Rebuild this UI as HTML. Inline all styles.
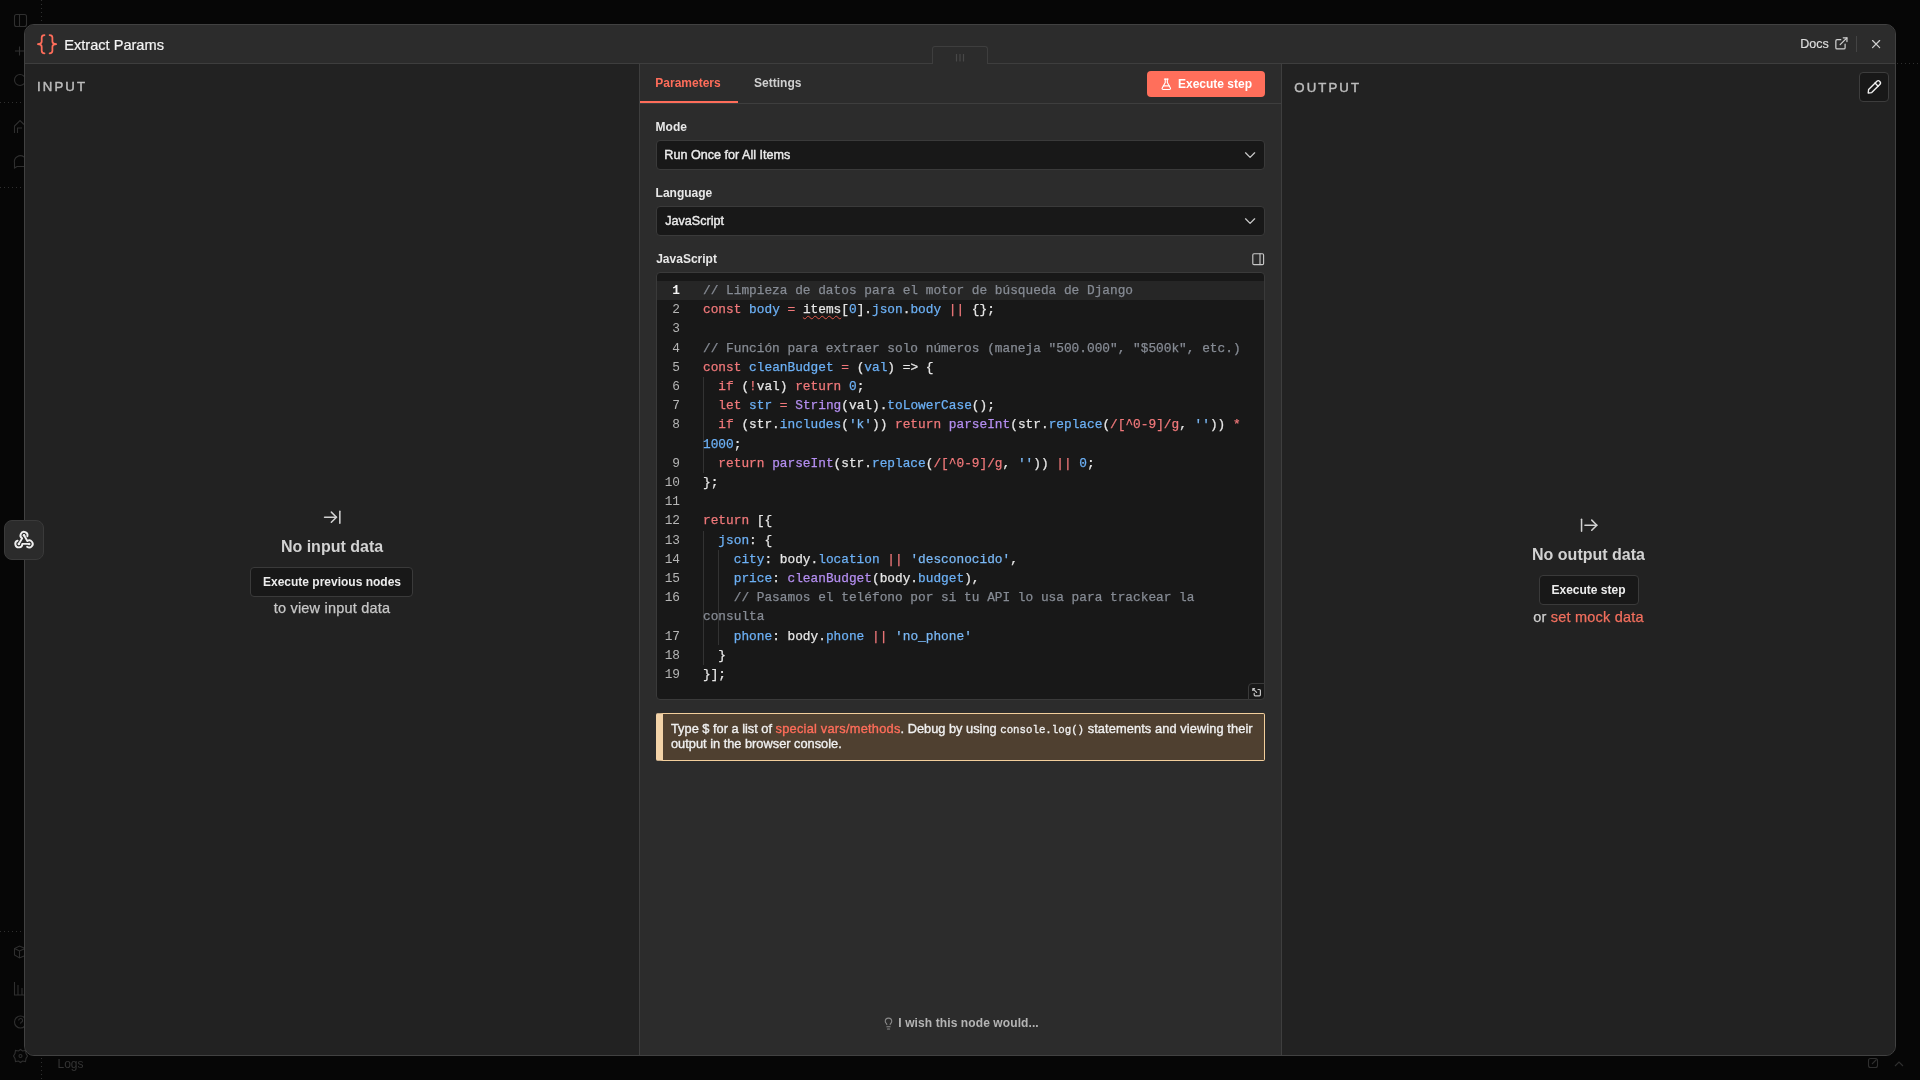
<!DOCTYPE html>
<html><head><meta charset="utf-8">
<style>
*{box-sizing:border-box;margin:0;padding:0}
html,body{width:1920px;height:1080px;overflow:hidden;background:#060606;font-family:"Liberation Sans",sans-serif;color:#e0e0e0}
.a{position:absolute}
.tx{position:absolute;white-space:pre;line-height:1}
.b{font-weight:bold}
svg{position:absolute;overflow:visible}
#modal{position:absolute;left:24px;top:24px;width:1872px;height:1032px;border:1px solid #414141;border-radius:10px;overflow:hidden;background:#222}
#hdr{position:absolute;left:0;top:0;width:1870px;height:39px;background:#2c2c2c;border-bottom:1px solid #3e3e3e}
#inp{position:absolute;left:0;top:39px;width:614px;height:991px;background:#222}
#mid{position:absolute;left:614px;top:39px;width:643px;height:991px;background:#2c2c2c;border-left:1px solid #3e3e3e;border-right:1px solid #3e3e3e}
#out{position:absolute;left:1257px;top:39px;width:613px;height:991px;background:#222}
.sel{position:absolute;left:656px;width:609px;height:30px;background:#181818;border:1px solid #3a3a3a;border-radius:4px}
.btn{position:absolute;background:#181818;border:1px solid #3a3a3a;border-radius:4px}
.cl{position:absolute;left:703px;height:19.2px;font:12.8px/19.2px "Liberation Mono",monospace;white-space:pre;-webkit-text-stroke:0.25px currentColor}
.cl span{-webkit-text-stroke:0.25px currentColor}
.gn{position:absolute;left:657px;width:23px;text-align:right;height:19.2px;font:12.8px/19.2px "Liberation Mono",monospace;color:#b5b5b5}
.gn.act{color:#f5f5f5;font-weight:bold}
.tu{text-decoration:underline wavy #e0584a;text-decoration-thickness:1px;text-underline-offset:2px}
.tc{color:#868b94}
.tk{color:#f0787a}
.tv{color:#6cb0f5}
.tw{color:#e6e6e6}
.tf{color:#b48ef0}
.ts{color:#7ab8f5}
.tn{color:#6cb0f5}
.tr{color:#f0787a}
.tu{color:#e6e6e6}
</style></head><body style="will-change:transform">
<!-- background canvas (faint) -->
<svg class="bgi" style="left:0;top:0" width="1920" height="1080" viewBox="0 0 1920 1080" fill="none" stroke="#2f2f2f" stroke-width="1.1">
  <line x1="41.5" y1="0" x2="41.5" y2="24" stroke-dasharray="1 3"/>
  <rect x="14.5" y="14.5" width="12" height="12" rx="2"/>
  <line x1="19.5" y1="14.5" x2="19.5" y2="26.5"/>
  <line x1="15" y1="51" x2="24" y2="51"/><line x1="19.5" y1="46.5" x2="19.5" y2="55.5"/>
  <circle cx="20" cy="80" r="5.5"/>
  <line x1="0" y1="102.5" x2="24" y2="102.5" stroke-dasharray="1 3"/>
  <path d="M14.5 133 V126 L20 120.5 L24 124.5 M17.5 133 V128 H22"/>
  <path d="M24 157 A6 6 0 0 0 14.5 163 L14.5 168 L17 166.5 H24"/>
  <line x1="0" y1="187.5" x2="24" y2="187.5" stroke-dasharray="1 3"/>
  <line x1="0" y1="931.5" x2="24" y2="931.5" stroke-dasharray="1 3"/>
  <path d="M24 948 L19.5 946 L14.5 948.5 V955 L19.5 958 L24 956 M14.5 948.5 L19.5 951 L24 949 M19.5 951 V958"/>
  <path d="M14.5 982 V995 H24 M18 985 V995 M22 988 V995"/>
  <circle cx="20.5" cy="1022" r="6"/><path d="M18.6 1020.4 A2 2 0 1 1 21 1022.4 L20.5 1023.6 M20.5 1025.4 V1025.6"/>
  <circle cx="20.5" cy="1056" r="1.5"/>
  <path d="M20.5 1049.5 L22.5 1051 L25.5 1050.5 L26 1053.5 L27.5 1056 L26 1058.5 L25.5 1061.5 L22.5 1061 L20.5 1062.5 L18.5 1061 L15.5 1061.5 L15 1058.5 L13.5 1056 L15 1053.5 L15.5 1050.5 L18.5 1051 Z"/>
  <line x1="41.5" y1="1058" x2="41.5" y2="1080" stroke-dasharray="1 3"/>
  <line x1="1897" y1="63.5" x2="1920" y2="63.5" stroke-dasharray="1 3"/>
  <rect x="1868.5" y="1058.5" width="9" height="9" rx="2"/>
  <path d="M1872 1064 L1876.5 1059.5"/>
  <path d="M1895 1066 L1899 1062 L1903 1066"/>
</svg>
<div class="tx" style="left:57.5px;top:1057.6px;font-size:12px;color:#343434">Logs</div>

<div id="modal">
  <div id="hdr"></div>
  <div id="inp"></div>
  <div id="mid"></div>
  <div id="out"></div>
</div>

<!-- drag handle -->
<div class="a" style="left:932px;top:46px;width:56px;height:18px;background:#2c2c2c;border:1px solid #3e3e3e;border-bottom:none;border-radius:3px 3px 0 0"></div>
<svg style="left:955px;top:54px" width="10" height="8" viewBox="0 0 10 8" stroke="#484848" stroke-width="1.2">
  <line x1="1.5" y1="0" x2="1.5" y2="7.5"/><line x1="5" y1="0" x2="5" y2="7.5"/><line x1="8.5" y1="0" x2="8.5" y2="7.5"/>
</svg>

<!-- header -->
<svg style="left:30px;top:30px" width="30" height="30" viewBox="0 0 30 30" fill="none" stroke="#ff6d5a" stroke-width="1.75" stroke-linecap="round" stroke-linejoin="round">
  <path d="M14.5 5 C12.8 5 11.7 5.7 11.7 7.6 V11.6 C11.7 13.2 10.9 14 7.9 14.2 C10.9 14.4 11.7 15.2 11.7 16.8 V20.8 C11.7 22.7 12.8 23.3 14.5 23.3"/><path d="M19.6 5 C21.3 5 22.4 5.7 22.4 7.6 V11.6 C22.4 13.2 23.2 14 26.2 14.2 C23.2 14.4 22.4 15.2 22.4 16.8 V20.8 C22.4 22.7 21.3 23.3 19.6 23.3"/>
</svg>
<div class="tx" style="left:64.2px;top:37.66px;font-size:14.6px;color:#f4f4f4;-webkit-text-stroke:0.2px #f4f4f4">Extract Params</div>

<div class="tx" style="left:1800.3px;top:38.3px;font-size:12.5px;color:#dcdcdc;-webkit-text-stroke:0.2px #dcdcdc">Docs</div>
<svg style="left:1833.75px;top:35.5px" width="14.8" height="14.8" viewBox="0 0 24 24" fill="none" stroke="#d0d0d0" stroke-width="2" stroke-linecap="round" stroke-linejoin="round">
  <path d="M15 3h6v6"/><path d="M10 14 21 3"/><path d="M18 13v6a2 2 0 0 1-2 2H5a2 2 0 0 1-2-2V8a2 2 0 0 1 2-2h6"/>
</svg>
<div class="a" style="left:1856px;top:36px;width:1px;height:16px;background:#444"></div>
<svg style="left:1868.9px;top:36.95px" width="14.2" height="14.2" viewBox="0 0 24 24" fill="none" stroke="#cfcfcf" stroke-width="2.1" stroke-linecap="round" stroke-linejoin="round">
  <path d="M18 6 6 18"/><path d="m6 6 12 12"/>
</svg>

<!-- INPUT panel -->
<div class="tx" style="left:37px;top:80px;font-size:13.2px;letter-spacing:2.1px;color:#bdbdbd;-webkit-text-stroke:0.45px #bdbdbd">INPUT</div>
<svg style="left:322.1px;top:506.8px" width="20.4" height="20.4" viewBox="0 0 24 24" fill="none" stroke="#d2d2d2" stroke-width="1.8" stroke-linecap="round" stroke-linejoin="round">
  <path d="M17 12H3"/><path d="m11 18 6-6-6-6"/><path d="M21 5v14"/>
</svg>
<div class="tx b" style="left:25px;width:614px;text-align:center;top:538.58px;font-size:16px;color:#d2d2d2">No input data</div>
<div class="btn" style="left:250px;top:567px;width:163px;height:30px"></div>
<div class="tx b" style="left:25px;width:614px;text-align:center;top:575.66px;font-size:12px;color:#ececec">Execute previous nodes</div>
<div class="tx" style="left:25px;width:614px;text-align:center;top:600.75px;font-size:14.5px;letter-spacing:0.2px;color:#c8c8c8;-webkit-text-stroke:0.25px #c8c8c8">to view input data</div>

<!-- webhook floating button -->
<div class="a" style="left:4px;top:520px;width:40px;height:40px;background:#2b2b2b;border:1px solid #3a3a3a;border-radius:8px"></div>
<svg style="left:10px;top:526px" width="28" height="28" viewBox="0 0 28 28" fill="none" stroke="#efefef" stroke-width="1.9" stroke-linecap="round" stroke-linejoin="round">
  <path d="M8.80 17.90 L12.18 12.34 A3.5 3.5 0 1 1 17.38 10.26"/><path d="M14.00 9.35 L17.38 14.91 A3.5 3.5 0 1 1 17.09 20.70"/><path d="M19.20 17.90 L12.30 17.90 A3.5 3.5 0 1 1 7.60 14.61"/>
  <g fill="#efefef" stroke="none"><circle cx="14.0" cy="9.35" r="1.25"/><circle cx="8.8" cy="17.9" r="1.25"/><circle cx="19.2" cy="17.9" r="1.25"/></g>
</svg>

<!-- MIDDLE panel -->
<div class="tx b" style="left:655.3px;top:76.96px;font-size:12px;color:#ff6d5a">Parameters</div>
<div class="tx b" style="left:754.1px;top:76.96px;font-size:12px;color:#d0d0d0">Settings</div>
<div class="a" style="left:640px;top:103px;width:641px;height:1px;background:#3e3e3e"></div>
<div class="a" style="left:640px;top:101px;width:98px;height:2px;background:#ff6d5a"></div>

<div class="a" style="left:1147px;top:71px;width:118px;height:26px;background:#ff6f5b;border-radius:4px"></div>
<svg style="left:1159.75px;top:77.65px" width="12.6" height="12.6" viewBox="0 0 24 24" fill="none" stroke="#fff" stroke-width="2.2" stroke-linecap="round" stroke-linejoin="round">
  <path d="M14 2v6a2 2 0 0 0 .245.96l5.51 10.08A2 2 0 0 1 18 22H6a2 2 0 0 1-1.755-2.96l5.51-10.08A2 2 0 0 0 10 8V2"/><path d="M6.453 15h11.094"/><path d="M8.5 2h7"/>
</svg>
<div class="tx b" style="left:1178px;top:77.86px;font-size:12px;color:#fff">Execute step</div>

<div class="tx b" style="left:655.6px;top:120.9px;font-size:12px;color:#e8e8e8">Mode</div>
<div class="sel" style="top:140px"></div>
<div class="tx" style="left:664.3px;top:148.6px;font-size:12.6px;color:#ececec;-webkit-text-stroke:0.4px #ececec">Run Once for All Items</div>
<svg style="left:1240.9px;top:145.9px" width="18.2" height="18.2" viewBox="0 0 24 24" fill="none" stroke="#c8c8c8" stroke-width="1.7" stroke-linecap="round" stroke-linejoin="round"><path d="m6 9 6 6 6-6"/></svg>

<div class="tx b" style="left:655.6px;top:187.2px;font-size:12px;color:#e8e8e8">Language</div>
<div class="sel" style="top:206px"></div>
<div class="tx" style="left:665.2px;top:214.8px;font-size:12.6px;color:#ececec;-webkit-text-stroke:0.4px #ececec">JavaScript</div>
<svg style="left:1240.9px;top:211.9px" width="18.2" height="18.2" viewBox="0 0 24 24" fill="none" stroke="#c8c8c8" stroke-width="1.7" stroke-linecap="round" stroke-linejoin="round"><path d="m6 9 6 6 6-6"/></svg>

<div class="tx b" style="left:656.2px;top:253px;font-size:12px;color:#e8e8e8">JavaScript</div>
<svg style="left:1250.8px;top:251.7px" width="14.4" height="14.4" viewBox="0 0 24 24" fill="none" stroke="#c8c8c8" stroke-width="1.9" stroke-linecap="round" stroke-linejoin="round">
  <rect width="18" height="18" x="3" y="3" rx="2"/><path d="M15 3v18"/>
</svg>

<!-- code editor -->
<div class="a" style="left:656px;top:272px;width:609px;height:428px;background:#181818;border:1px solid #3a3a3a;border-radius:4px"></div>
<div class="a" style="left:657px;top:281px;width:607px;height:19.2px;background:#262626"></div>
<!-- indent guides -->
<div class="a" style="left:703px;top:377px;width:1px;height:96px;background:#333"></div>
<div class="a" style="left:703px;top:531px;width:1px;height:134px;background:#333"></div>
<div class="a" style="left:718px;top:550px;width:1px;height:95px;background:#333"></div>
<div class="gn act" style="top:281.00px">1</div>
<div class="gn" style="top:300.20px">2</div>
<div class="gn" style="top:319.40px">3</div>
<div class="gn" style="top:338.60px">4</div>
<div class="gn" style="top:357.80px">5</div>
<div class="gn" style="top:377.00px">6</div>
<div class="gn" style="top:396.20px">7</div>
<div class="gn" style="top:415.40px">8</div>
<div class="gn" style="top:453.80px">9</div>
<div class="gn" style="top:473.00px">10</div>
<div class="gn" style="top:492.20px">11</div>
<div class="gn" style="top:511.40px">12</div>
<div class="gn" style="top:530.60px">13</div>
<div class="gn" style="top:549.80px">14</div>
<div class="gn" style="top:569.00px">15</div>
<div class="gn" style="top:588.20px">16</div>
<div class="gn" style="top:626.60px">17</div>
<div class="gn" style="top:645.80px">18</div>
<div class="gn" style="top:665.00px">19</div>
<div class="cl" style="top:281.00px"><span class="tc">// Limpieza de datos para el motor de búsqueda de Django</span></div>
<div class="cl" style="top:300.20px"><span class="tk">const</span><span class="tw"> </span><span class="tv">body</span><span class="tw"> </span><span class="tk">=</span><span class="tw"> </span><span class="tu">items</span><span class="tw">[</span><span class="tn">0</span><span class="tw">].</span><span class="tv">json</span><span class="tw">.</span><span class="tv">body</span><span class="tw"> </span><span class="tk">||</span><span class="tw"> {};</span></div>
<div class="cl" style="top:319.40px"></div>
<div class="cl" style="top:338.60px"><span class="tc">// Función para extraer solo números (maneja "500.000", "$500k", etc.)</span></div>
<div class="cl" style="top:357.80px"><span class="tk">const</span><span class="tw"> </span><span class="tv">cleanBudget</span><span class="tw"> </span><span class="tk">=</span><span class="tw"> (</span><span class="tv">val</span><span class="tw">) =&gt; {</span></div>
<div class="cl" style="top:377.00px"><span class="tw">  </span><span class="tk">if</span><span class="tw"> (</span><span class="tk">!</span><span class="tw">val) </span><span class="tk">return</span><span class="tw"> </span><span class="tn">0</span><span class="tw">;</span></div>
<div class="cl" style="top:396.20px"><span class="tw">  </span><span class="tk">let</span><span class="tw"> </span><span class="tv">str</span><span class="tw"> </span><span class="tk">=</span><span class="tw"> </span><span class="tf">String</span><span class="tw">(val).</span><span class="tv">toLowerCase</span><span class="tw">();</span></div>
<div class="cl" style="top:415.40px"><span class="tw">  </span><span class="tk">if</span><span class="tw"> (str.</span><span class="tv">includes</span><span class="tw">(</span><span class="ts">'k'</span><span class="tw">)) </span><span class="tk">return</span><span class="tw"> </span><span class="tf">parseInt</span><span class="tw">(str.</span><span class="tv">replace</span><span class="tw">(</span><span class="tr">/[^0-9]/g</span><span class="tw">, </span><span class="ts">''</span><span class="tw">))</span><span class="tw"> </span><span class="tk">*</span></div>
<div class="cl" style="top:434.60px"><span class="tn">1000</span><span class="tw">;</span></div>
<div class="cl" style="top:453.80px"><span class="tw">  </span><span class="tk">return</span><span class="tw"> </span><span class="tf">parseInt</span><span class="tw">(str.</span><span class="tv">replace</span><span class="tw">(</span><span class="tr">/[^0-9]/g</span><span class="tw">, </span><span class="ts">''</span><span class="tw">))</span><span class="tw"> </span><span class="tk">||</span><span class="tw"> </span><span class="tn">0</span><span class="tw">;</span></div>
<div class="cl" style="top:473.00px"><span class="tw">};</span></div>
<div class="cl" style="top:492.20px"></div>
<div class="cl" style="top:511.40px"><span class="tk">return</span><span class="tw"> [{</span></div>
<div class="cl" style="top:530.60px"><span class="tw">  </span><span class="tv">json</span><span class="tw">: {</span></div>
<div class="cl" style="top:549.80px"><span class="tw">    </span><span class="tv">city</span><span class="tw">: body.</span><span class="tv">location</span><span class="tw"> </span><span class="tk">||</span><span class="tw"> </span><span class="ts">'desconocido'</span><span class="tw">,</span></div>
<div class="cl" style="top:569.00px"><span class="tw">    </span><span class="tv">price</span><span class="tw">: </span><span class="tf">cleanBudget</span><span class="tw">(body.</span><span class="tv">budget</span><span class="tw">),</span></div>
<div class="cl" style="top:588.20px"><span class="tw">    </span><span class="tc">// Pasamos el teléfono por si tu API lo usa para trackear la</span></div>
<div class="cl" style="top:607.40px"><span class="tc">consulta</span></div>
<div class="cl" style="top:626.60px"><span class="tw">    </span><span class="tv">phone</span><span class="tw">: body.</span><span class="tv">phone</span><span class="tw"> </span><span class="tk">||</span><span class="tw"> </span><span class="ts">'no_phone'</span></div>
<div class="cl" style="top:645.80px"><span class="tw">  }</span></div>
<div class="cl" style="top:665.00px"><span class="tw">}];</span></div>
<div class="a" style="left:1248px;top:683px;width:17px;height:17px;background:#181818;border:1px solid #3a3a3a;border-radius:4px 0 4px 0"></div>
<svg style="left:1251px;top:687px" width="11" height="11" viewBox="0 0 11 11" fill="none" stroke="#c4c4c4" stroke-width="1.2" stroke-linecap="round" stroke-linejoin="round">
  <path d="M7 2.5 H8.4 C9 2.5 9.4 2.9 9.4 3.5 V7.8 C9.4 8.4 9 8.8 8.4 8.8 H4.2 C3.6 8.8 3.2 8.4 3.2 7.8 V6.4"/><path d="M1.8 1.6 L5.6 5.4 M1.8 1.6 V3.4 M1.8 1.6 H3.6"/>
</svg>

<!-- notice -->
<div class="a" style="left:656px;top:713px;width:609px;height:48px;background:#4f4030;border:1px solid #f3cf9c;border-left:7px solid #f3d3a8;border-radius:2px"></div>
<div class="tx" style="left:671px;top:723.3px;font-size:12.8px;color:#f0f0f0;-webkit-text-stroke:0.35px #f0f0f0">Type $ for a list of <span style="color:#ff6d5a;-webkit-text-stroke:0.35px #ff6d5a;letter-spacing:0.24px">special vars/methods</span>. Debug by using <span style="font:10.75px 'Liberation Mono',monospace;-webkit-text-stroke:0.3px #f0f0f0">console.log()</span><span style="letter-spacing:0.1px"> statements and viewing their</span></div>
<div class="tx" style="left:671px;top:738.2px;font-size:12.8px;color:#f0f0f0;-webkit-text-stroke:0.35px #f0f0f0">output in the browser console.</div>

<!-- wish -->
<svg style="left:882.35px;top:1016.55px" width="13" height="13" viewBox="0 0 24 24" fill="none" stroke="#8a8a8a" stroke-width="2" stroke-linecap="round" stroke-linejoin="round">
  <path d="M15 14c.2-1 .7-1.7 1.5-2.5 1-.9 1.5-2.2 1.5-3.5A6 6 0 0 0 6 8c0 1 .2 2.2 1.5 3.5.7.7 1.3 1.5 1.5 2.5"/><path d="M9 18h6"/><path d="M10 22h4"/>
</svg>
<div class="tx b" style="left:898.3px;top:1016.66px;font-size:12px;letter-spacing:0.1px;color:#b4b4b4">I wish this node would...</div>

<!-- OUTPUT panel -->
<div class="tx" style="left:1294.3px;top:81.2px;font-size:13.2px;letter-spacing:2.1px;color:#bdbdbd;-webkit-text-stroke:0.45px #bdbdbd">OUTPUT</div>
<div class="a" style="left:1859px;top:72px;width:30px;height:30px;background:#181818;border:1px solid #3d3d3d;border-radius:4px"></div>
<svg style="left:1866px;top:79px" width="16" height="16" viewBox="0 0 16 16" fill="none" stroke="#f0f0f0" stroke-width="1.35" stroke-linecap="round" stroke-linejoin="round">
  <g transform="translate(1.9,14.3) rotate(-45)"><path d="M0.4 0 L3.2 -2.2 H14.6 A2.2 2.2 0 0 1 14.6 2.2 H3.2 Z"/><path d="M12.3 -2.2 V2.2"/></g>
</svg>
<svg style="left:1578.7px;top:514.8px" width="20.4" height="20.4" viewBox="0 0 24 24" fill="none" stroke="#d2d2d2" stroke-width="1.8" stroke-linecap="round" stroke-linejoin="round">
  <path d="M3 5v14"/><path d="M21 12H7"/><path d="m15 18 6-6-6-6"/>
</svg>
<div class="tx b" style="left:1282px;width:613px;text-align:center;top:546.5px;font-size:16px;color:#d2d2d2">No output data</div>
<div class="btn" style="left:1539px;top:575px;width:100px;height:30px"></div>
<div class="tx b" style="left:1282px;width:613px;text-align:center;top:584.46px;font-size:12px;color:#ececec">Execute step</div>
<div class="tx" style="left:1282px;width:613px;text-align:center;top:609.55px;font-size:14.5px;letter-spacing:0.2px;color:#d0d0d0;-webkit-text-stroke:0.25px #d0d0d0">or <span style="color:#f26f5e;-webkit-text-stroke:0.25px #f26f5e">set mock data</span></div>

</body></html>
